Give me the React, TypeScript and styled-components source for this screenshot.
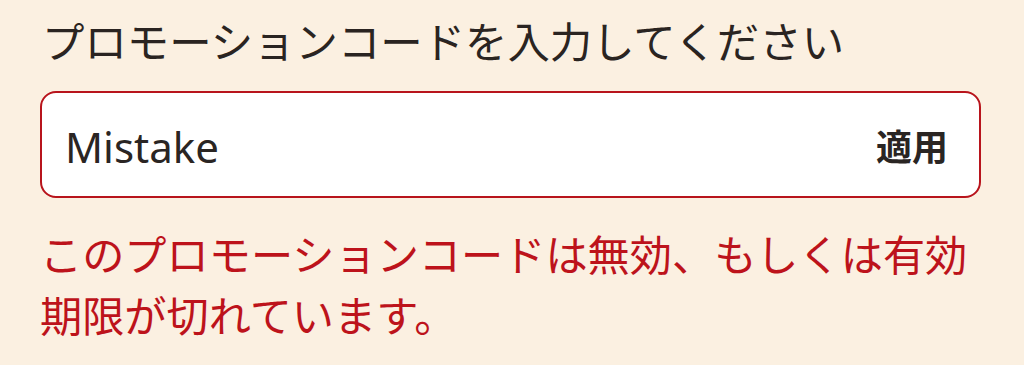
import React from "react";
import styled, { createGlobalStyle } from "styled-components";

const GlobalStyle = createGlobalStyle`
  html, body {
    margin: 0;
    padding: 0;
    background: #fbf0e1;
  }
  * { box-sizing: border-box; }
`;

const Page = styled.div`
  width: 1024px;
  height: 365px;
  overflow: hidden;
  background: #fbf0e1;
  padding: 18px 43px 0 40px;
  font-family: "Noto Sans", "Noto Sans CJK JP", sans-serif;
  display: flex;
  flex-direction: column;
`;

const Label = styled.label`
  display: block;
  flex-shrink: 0;
  font-family: "Noto Sans CJK JP", sans-serif;
  font-size: 42.4px;
  font-weight: 400;
  line-height: 44px;
  color: #2a2421;
  padding-left: 2px;
  margin-bottom: 29px;
  white-space: nowrap;
`;

const Field = styled.div`
  flex-shrink: 0;
  height: 107px;
  border: 2px solid #b8141c;
  border-radius: 16px;
  background: #ffffff;
  display: flex;
  align-items: center;
  padding: 0 31px 0 23px;
`;

const Input = styled.input`
  flex: 1;
  min-width: 0;
  border: none;
  outline: none;
  background: transparent;
  font-family: "Noto Sans", sans-serif;
  font-size: 42px;
  color: #2a2523;
  padding: 0;
  margin-top: 4px;
`;

const Apply = styled.button`
  border: none;
  background: transparent;
  font-family: "Noto Sans CJK JP", sans-serif;
  font-weight: 700;
  font-size: 36px;
  color: #2a2523;
  padding: 0;
  cursor: pointer;
`;

const ErrorText = styled.p`
  flex-shrink: 0;
  margin: 24px 0 0;
  font-family: "Noto Sans CJK JP", sans-serif;
  font-size: 42.2px;
  line-height: 61px;
  color: #bd131b;
  white-space: nowrap;
`;

export default function App() {
  return (
    <>
      <GlobalStyle />
      <Page>
        <Label>プロモーションコードを入力してください</Label>
        <Field>
          <Input defaultValue="Mistake" />
          <Apply>適用</Apply>
        </Field>
        <ErrorText>
          このプロモーションコードは無効、もしくは有効
          <br />
          期限が切れています。
        </ErrorText>
      </Page>
    </>
  );
}
